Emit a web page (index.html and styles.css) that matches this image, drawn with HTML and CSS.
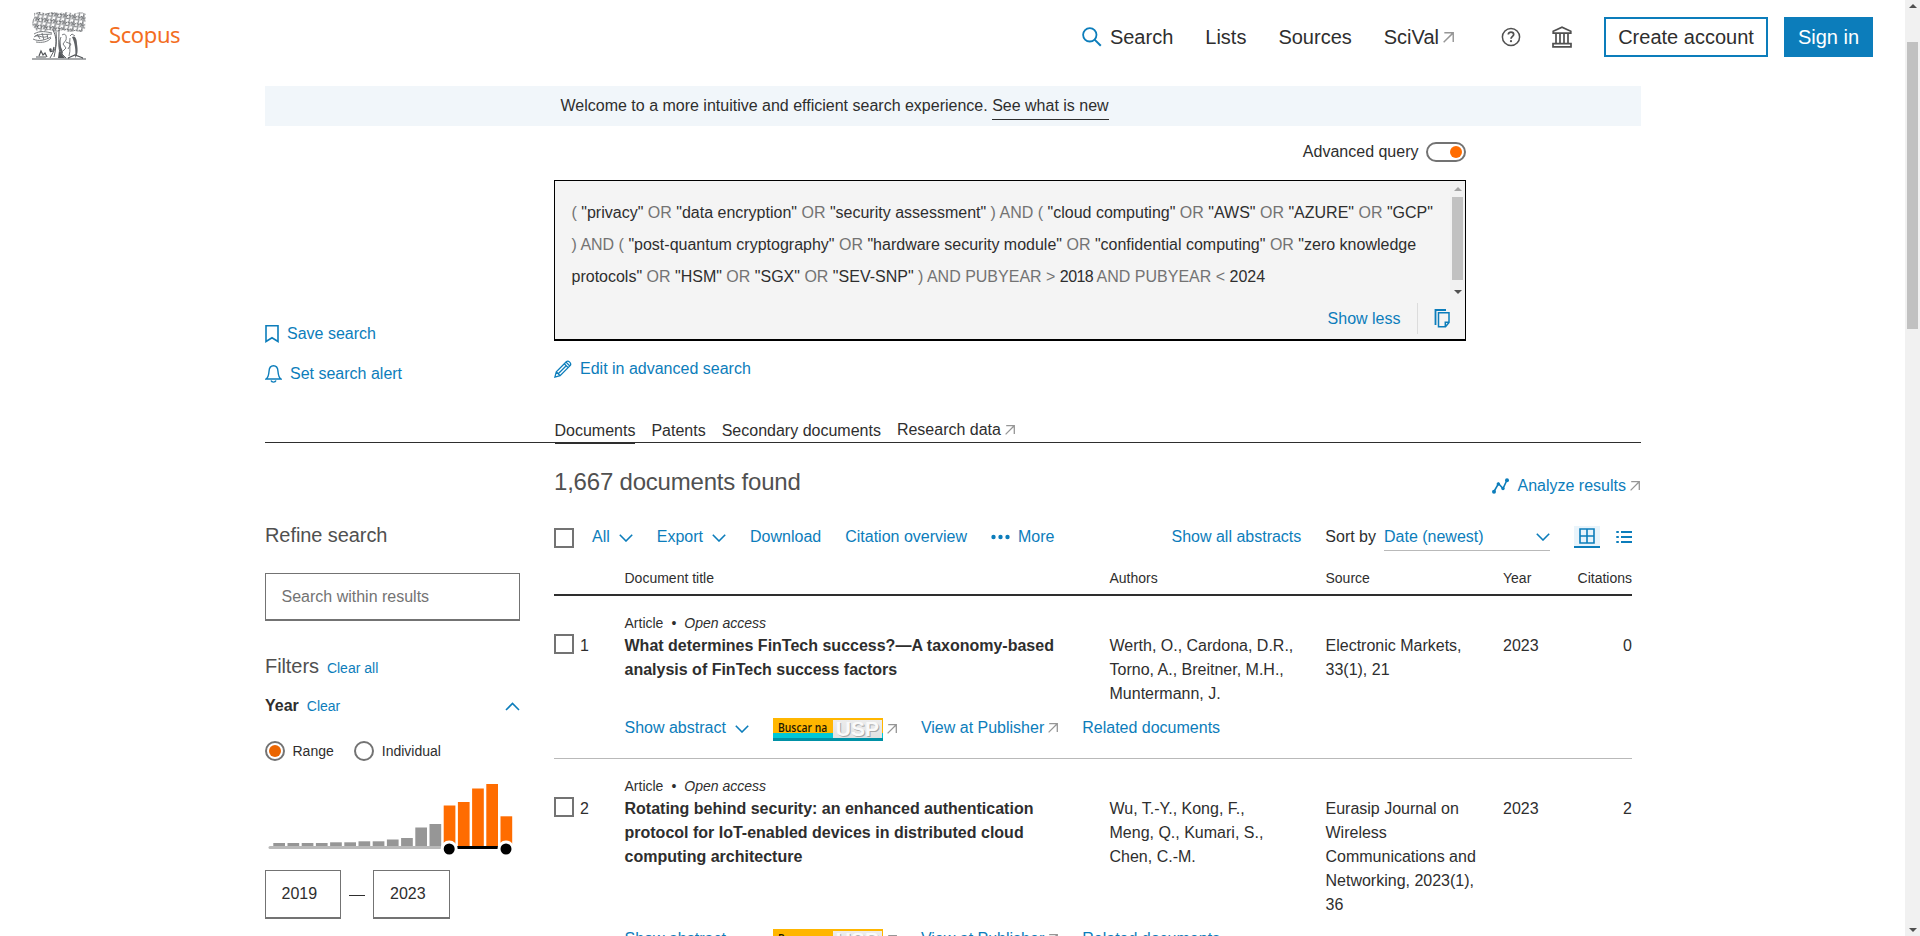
FILE: index.html
```html
<!DOCTYPE html>
<html lang="en">
<head>
<meta charset="utf-8">
<title>Scopus - Document search results</title>
<link rel="stylesheet" href="styles.css">
</head>
<body>
<svg class="defs" width="0" height="0" aria-hidden="true">
  <symbol id="ext" viewBox="0 0 10 10"><path d="M1.2.7H9.3V9M9.2.8L.6 9.4" fill="none" stroke="#969696" stroke-width="1.3"/></symbol>
  <symbol id="down" viewBox="0 0 14 8"><path d="M.8.8L7 7L13.2.8" fill="none" stroke="#0c7dbb" stroke-width="1.6"/></symbol>
  <pattern id="leaves" width="9" height="7" patternUnits="userSpaceOnUse" patternTransform="rotate(8)">
    <path d="M0 2c2-2 3 0 2 2s2 2 3 0M4 1c2-1 3 0 3 2s-2 1-2 3 3 1 4-1M1 6c1-1 2 0 2 2M7 7c0-1 1-2 2-1M8 0c-1 1 0 2 1 1M2 0l1 1.500M0 4.500l1 1M6 5.500l1.500-1" fill="none" stroke="#505357" stroke-width="1"/>
  </pattern>
</svg>
<div class="window">
  <div class="page">
    <header class="header">
      <svg class="tree" width="54" height="48" viewBox="0 0 54 48">
        <path d="M2 1L8 0L14 1.500L20 0L27 1L35 0L42 1.500L49 0L54 2L53 18L49 20L43 19L37 20L31 18L24 20L17 18L11 20L5 19L1 15L0 10L2 6Z" fill="url(#leaves)"/>
        <path d="M2 22C8 18 15 20 20 21M2 25C7 21 14 23 20 22M1 27C7 30 13 28 19 25M4 30C10 31 16 30 19 26M3 24c5-1 8 3 13 0M5 22l3 5M10 21l2 7M15 22l1 5" fill="none" stroke="#6b6e72" stroke-width=".9"/>
        <path d="M21 18C24 24 25 30 23 37L18 46M27 18C27 26 26 35 28 40L34 46M24 20c1 8 0 17-2 25" fill="none" stroke="#606367" stroke-width="1"/>
        <path d="M29 25c-2 5-2 12 1 17M30 23c3-2 5 0 4 5l-3 4 3 4-3 3M38 26c-1 5 1 12-1 18M34 30l5 2-3 5M38 24l2-2 3 2" fill="none" stroke="#6b6e72" stroke-width=".9"/>
        <path d="M40 25c3-2 5 2 5 7 1 6 1 11-2 14 1-7 0-15-3-21zM28 26l-1 10 3 7 1-3-2-5z" fill="#606367"/>
        <path d="M27 39l6 7h-7z" fill="#53565a"/>
        <path d="M0 47H54M4 45h10M7 44l2-5 2 4 2-2 2 4M18 40c2-2 1-4 0-3s1 3 3 2l1-4M36 46l7-3 8 3" fill="none" stroke="#53565a" stroke-width="1.200"/>
      </svg>
      <span class="brand">Scopus</span>
      <nav class="nav">
        <a class="nav-search"><svg width="20" height="20" viewBox="0 0 20 20"><circle cx="7.800" cy="7.800" r="6.700" fill="none" stroke="#0c7dbb" stroke-width="1.800"/><path d="M12.600 12.600L18.800 18.800" stroke="#0c7dbb" stroke-width="2"/></svg>Search</a>
        <a>Lists</a>
        <a>Sources</a>
        <a class="nav-ext">SciVal<svg width="11" height="11"><use href="#ext"/></svg></a>
      </nav>
      <svg class="help" width="20" height="20" viewBox="0 0 20 20"><circle cx="10" cy="10" r="8.600" fill="none" stroke="#505050" stroke-width="1.500"/><path d="M7.300 7.600C7.300 4.300 12.700 4.400 12.700 7.500C12.700 9.400 10 9.300 10 11.800" fill="none" stroke="#505050" stroke-width="1.700"/><circle cx="10" cy="14.200" r="1.100" fill="#505050"/></svg>
      <svg class="bank" width="20" height="22" viewBox="0 0 20 22"><path d="M1.200 7.200V5.200L10 1.200L18.800 5.200V7.200ZM4 8V18M8 8V18M12 8V18M16 8V18M1 20.900V17.700H19V20.900Z" fill="none" stroke="#505050" stroke-width="1.700"/></svg>
      <a class="btn">Create account</a>
      <a class="btn btn-primary">Sign in</a>
    </header>

    <div class="content">
      <div class="banner">Welcome to a more intuitive and efficient search experience.&nbsp;<a>See what is new</a></div>

      <div class="top">
        <div class="saved">
          <a><svg width="14" height="18" viewBox="0 0 14 18"><path d="M1 .8H13V16.500L7 12.800L1 16.500Z" fill="none" stroke="#0c7dbb" stroke-width="1.600"/></svg>Save search</a>
          <a><svg width="17" height="18" viewBox="0 0 17 18"><path d="M1 14H16C13.700 12.500 13.300 10.500 13 6.500C12.800 3 11.500.8 8.500.8S4.200 3 4 6.500C3.700 10.500 3.300 12.500 1 14ZM6 15.500C6.700 17.700 10.300 17.700 11 15.500" fill="none" stroke="#0c7dbb" stroke-width="1.400"/></svg>Set search alert</a>
        </div>
        <div class="query">
          <div class="toggle-row">Advanced query<span class="toggle"></span></div>
          <div class="query-box">
            <div class="query-scroll">
              <p>( <b>"privacy"</b> OR <b>"data encryption"</b> OR <b>"security assessment"</b> ) AND ( <b>"cloud computing"</b> OR <b>"AWS"</b> OR <b>"AZURE"</b> OR <b>"GCP"</b><br>) AND ( <b>"post-quantum cryptography"</b> OR <b>"hardware security module"</b> OR <b>"confidential computing"</b> OR <b>"zero knowledge</b><br><b>protocols"</b> OR <b>"HSM"</b> OR <b>"SGX"</b> OR <b>"SEV-SNP"</b> ) AND PUBYEAR &gt; <b class="yr">2018</b> AND PUBYEAR &lt; <b>2024</b></p>
              <div class="mini-bar"><i class="tri up pale"></i><i class="mini-thumb"></i><i class="tri dn"></i></div>
            </div>
            <div class="query-foot"><a>Show less</a><svg width="16" height="19" viewBox="0 0 16 19"><path d="M4.500 3.800H15V13.500L11.500 17.800H4.500ZM11.300 17.500V13.300H15" fill="none" stroke="#0c7dbb" stroke-width="1.500"/><path d="M1.500 16V1H12" fill="none" stroke="#0c7dbb" stroke-width="1.800"/></svg></div>
          </div>
          <a class="edit"><svg width="18" height="18" viewBox="0 0 18 18"><path d="M.9 17.100L2.300 11.800L12.300 1.800C14.300-.2 18 3.500 16.100 5.600L6.100 15.700ZM10.300 3.800L14.200 7.700M12 2.100L15.900 6M4.500 13.500L11.700 6.300M2.300 11.800L6.100 15.700" fill="none" stroke="#0c7dbb" stroke-width="1.300"/></svg>Edit in advanced search</a>
        </div>
      </div>

      <div class="tabs">
        <a class="on">Documents</a><a>Patents</a><a>Secondary documents</a><a class="research">Research data<svg width="10" height="10"><use href="#ext"/></svg></a>
      </div>

      <div class="body">
        <aside class="side">
          <h2>Refine search</h2>
          <div class="field wide">Search within results</div>
          <div class="filters"><h2>Filters</h2><a>Clear all</a></div>
          <div class="year"><strong>Year</strong><a>Clear</a><svg width="15" height="9" viewBox="0 0 15 9"><path d="M1 8L7.500 1.500L14 8" fill="none" stroke="#0c7dbb" stroke-width="1.600"/></svg></div>
          <div class="radios"><i class="radio checked"></i><span>Range</span><i class="radio"></i><span>Individual</span></div>
          <svg class="chart" width="255" height="74" viewBox="0 0 255 74">
            <g fill="#969696"><rect x="8.300" y="61" width="11.700" height="4"/><rect x="22.500" y="61" width="11.700" height="4"/><rect x="36.700" y="61" width="11.700" height="4"/><rect x="50.900" y="61" width="11.700" height="4"/><rect x="65.100" y="60.300" width="11.700" height="5"/><rect x="79.300" y="60.300" width="11.700" height="5"/><rect x="93.500" y="59.300" width="11.700" height="6"/><rect x="107.700" y="59.300" width="11.700" height="6"/><rect x="121.900" y="57.500" width="11.700" height="8"/><rect x="136.100" y="56" width="11.700" height="9"/><rect x="150.300" y="45.500" width="11.700" height="20"/><rect x="164.500" y="42" width="11.700" height="23"/></g>
            <path d="M5 65.500H247" stroke="#b9b9b9" stroke-width="3" stroke-linecap="round"/>
            <g fill="#ff6c00"><rect x="178.700" y="23.500" width="11.700" height="41"/><rect x="192.900" y="20" width="11.700" height="44.500"/><rect x="207.100" y="6.500" width="11.700" height="58"/><rect x="221.300" y="2" width="11.700" height="62.500"/><rect x="235.500" y="34.300" width="11.700" height="30"/></g>
            <path d="M184 65.500H234" stroke="#000" stroke-width="3"/>
            <g stroke="#fff" stroke-width="3"><circle cx="184.200" cy="67" r="7"/><circle cx="241" cy="67" r="7"/></g>
          </svg>
          <div class="range"><div class="field">2019</div><span></span><div class="field second">2023</div></div>
        </aside>

        <main class="main">
          <div class="count"><h1>1,667 documents found</h1><a><svg width="17" height="16" viewBox="0 0 17 16"><path d="M2 13.500L6.500 5.500L11 10.500L15 2" fill="none" stroke="#0c7dbb" stroke-width="1.600"/><g fill="#0c7dbb"><circle cx="2" cy="13.700" r="2"/><circle cx="6.300" cy="6" r="1.700"/><circle cx="11" cy="10.500" r="1.700"/><circle cx="15" cy="2.200" r="2"/></g></svg><span>Analyze results</span><svg width="10" height="10"><use href="#ext"/></svg></a></div>

          <div class="toolbar">
            <i class="box"></i>
            <a class="all">All<svg width="14" height="8"><use href="#down"/></svg></a>
            <a class="export">Export<svg width="14" height="8"><use href="#down"/></svg></a>
            <a class="download">Download</a>
            <a class="cit">Citation overview</a>
            <a class="more"><svg width="19" height="6" viewBox="0 0 19 6"><g fill="#0c7dbb"><circle cx="2.500" cy="3" r="2.200"/><circle cx="9.500" cy="3" r="2.200"/><circle cx="16.500" cy="3" r="2.200"/></g></svg>More</a>
            <a class="abstracts">Show all abstracts</a>
            <span class="sort">Sort by</span>
            <div class="select">Date (newest)<svg width="14" height="8"><use href="#down"/></svg></div>
            <div class="grid-view"><svg width="16" height="16" viewBox="0 0 16 16"><path d="M1 1H15V15H1ZM8 1V15M1 8H15" fill="none" stroke="#0c7dbb" stroke-width="1.600"/></svg></div>
            <svg class="list-view" width="16" height="14" viewBox="0 0 16 14"><path d="M5 2H16M5 7H16M5 12H16M.3 2H2.800M.3 7H2.800M.3 12H2.800" stroke="#0c7dbb" stroke-width="1.800"/></svg>
          </div>

          <div class="thead cols"><span></span><span>Document title</span><span>Authors</span><span>Source</span><span>Year</span><span class="num">Citations</span></div>

          <article class="row">
            <div class="kind">Article<span>•</span><em>Open access</em></div>
            <div class="cols">
              <div class="pick"><i class="box"></i>1</div>
              <h3>What determines FinTech success?—A taxonomy-based<br>analysis of FinTech success factors</h3>
              <div>Werth, O., Cardona, D.R.,<br>Torno, A., Breitner, M.H.,<br>Muntermann, J.</div>
              <div>Electronic Markets,<br>33(1), 21</div>
              <div>2023</div>
              <div class="num">0</div>
            </div>
            <div class="actions"><a class="show">Show abstract<svg width="14" height="8"><use href="#down"/></svg></a><span class="usp"><b>Buscar na</b><i>USP</i></span><svg class="usp-ext" width="10" height="10"><use href="#ext"/></svg><a class="pub">View at Publisher<svg width="10" height="10"><use href="#ext"/></svg></a><a>Related documents</a></div>
          </article>

          <article class="row">
            <div class="kind">Article<span>•</span><em>Open access</em></div>
            <div class="cols">
              <div class="pick"><i class="box"></i>2</div>
              <h3>Rotating behind security: an enhanced authentication<br>protocol for IoT-enabled devices in distributed cloud<br>computing architecture</h3>
              <div>Wu, T.-Y., Kong, F.,<br>Meng, Q., Kumari, S.,<br>Chen, C.-M.</div>
              <div>Eurasip Journal on<br>Wireless<br>Communications and<br>Networking, 2023(1),<br>36</div>
              <div>2023</div>
              <div class="num">2</div>
            </div>
            <div class="actions"><a class="show">Show abstract<svg width="14" height="8"><use href="#down"/></svg></a><span class="usp"><b>Buscar na</b><i>USP</i></span><svg class="usp-ext" width="10" height="10"><use href="#ext"/></svg><a class="pub">View at Publisher<svg width="10" height="10"><use href="#ext"/></svg></a><a>Related documents</a></div>
          </article>
        </main>
      </div>
    </div>
  </div>
  <div class="scrollbar"><i class="tri up"></i><i class="thumb"></i><i class="tri dn"></i></div>
</div>
</body>
</html>
```

FILE: styles.css
```css
* { box-sizing: border-box; margin: 0; padding: 0; }
body { height: 936px; overflow: hidden; background: #fff; color: #2e2e2e; font: 16px/24px "Liberation Sans", Arial, sans-serif; white-space: nowrap; }
svg { display: block; flex: none; }
i, em { display: block; }
.defs { position: absolute; }
a { color: #0c7dbb; display: flex; align-items: center; }
h1, h2 { color: #505050; font-weight: 400; }
.window { display: flex; height: 936px; overflow: hidden; }
.page { width: 1905px; height: 936px; overflow: hidden; }

.scrollbar { width: 15px; height: 936px; background: #f1f1f1; display: flex; flex-direction: column; align-items: center; padding: 4px 0; }
.thumb { width: 11px; height: 287px; background: #c1c1c1; margin: 34px 0 auto; }
.tri { width: 0; height: 0; border: 4px solid transparent; }
.tri.up { border-top: 0; border-bottom-color: #505050; }
.tri.dn { border-bottom: 0; border-top-color: #505050; }
.tri.up.pale { border-bottom-color: #a3a3a3; }

.header { display: flex; align-items: center; height: 74px; padding: 0 32px; font-size: 20px; }
.tree { margin-top: -2px; }
.brand { margin: -7px 0 0 23px; font: 22px/30px "Noto Sans", sans-serif; letter-spacing: -.4px; color: #f36d21; }
.nav { display: flex; gap: 32px; margin-left: auto; }
.nav a { color: #2e2e2e; }
.nav-search svg { margin-right: 8px; }
.nav-ext svg { margin-left: 4px; }
.help { margin-left: 47px; }
.bank { margin: 0 32px 0 31px; }
.btn { height: 40px; width: 164px; justify-content: center; border: 2px solid #0c7dbb; color: #2e2e2e; }
.btn-primary { width: 89px; margin-left: 16px; background: #0c7dbb; color: #fff; }

.content { width: 1376px; margin: 12px 0 0 265px; }
.banner { display: flex; height: 40px; padding: 8px 0 0 295.5px; background: #f1f6fa; }
.banner a { color: #2e2e2e; height: 26px; border-bottom: 1px solid #2e2e2e; align-items: flex-start; }

.top { display: grid; grid-template-columns: 289px 912px; height: 293px; }
.saved { display: flex; flex-direction: column; gap: 16px; padding-top: 196px; }
.saved svg { margin: 0 8px 0 0; }
.toggle-row { display: flex; align-items: center; justify-content: flex-end; gap: 7.5px; padding-top: 14px; }
.toggle { width: 40px; height: 20px; border: 2px solid #737373; border-radius: 10px; padding: 2px; display: flex; justify-content: flex-end; }
.toggle::after { content: ""; width: 12px; height: 12px; border-radius: 50%; background: #ff6c00; }
.query-box { height: 161px; margin-top: 16px; border: 1px solid #000; border-bottom-width: 2px; background: #f4f4f4; }
.query-scroll { display: flex; justify-content: space-between; height: 119px; padding-left: 16.5px; color: #737373; }
.query-scroll p { line-height: 32px; padding-top: 16px; }
.query-scroll b { font-weight: 400; color: #2e2e2e; }
.query-scroll .yr { letter-spacing: -.6px; }
.mini-bar { width: 15px; background: #f1f1f1; display: flex; flex-direction: column; align-items: center; justify-content: space-between; padding: 6px 0; }
.mini-thumb { width: 11px; height: 83px; background: #c1c1c1; margin-bottom: 5px; }
.query-foot { display: flex; justify-content: flex-end; align-items: center; height: 37px; padding-right: 15.5px; }
.query-foot a { height: 31px; padding-right: 16px; border-right: 1px solid #dcdcdc; margin-right: 16px; }
.edit { margin-top: 16px; }
.edit svg { margin: 0 8px 0 0; }

.tabs { display: flex; gap: 16px; height: 24px; border-bottom: 1px solid #2e2e2e; padding-left: 289.5px; }
.tabs a { color: #2e2e2e; height: 25px; align-items: flex-start; }
.tabs .on { border-bottom: 2px solid #2e2e2e; }
.tabs .research { margin-top: -1px; }
.research svg { margin: 7px 0 0 4.5px; }

.body { display: grid; grid-template-columns: 255px 1087px; column-gap: 34px; }
.side { padding-top: 79px; font-size: 14px; }
.side h2 { font-size: 20px; line-height: 26px; letter-spacing: -.08px; }
.field { width: 76px; height: 49px; border: 1px solid #737373; border-bottom-width: 2px; padding: 11px 15.5px; font-size: 16px; }
.field.wide { width: 255px; height: 48px; margin-top: 25px; color: #737373; }
.filters { display: flex; align-items: center; gap: 8px; margin-top: 31px; }
.filters a { padding-top: 4px; }
.year { display: flex; align-items: center; gap: 8px; margin-top: 14px; }
.year strong { font-size: 16px; }
.year svg { margin-left: auto; }
.radios { display: flex; align-items: center; margin-top: 21px; }
.radios span { margin-left: 7.5px; }
.radio { width: 20px; height: 20px; border: 2px solid #737373; border-radius: 50%; }
.radio.checked { padding: 2px; }
.radio.checked::before { content: ""; display: block; width: 12px; height: 12px; border-radius: 50%; background: #eb6500; }
.radios span + .radio { margin-left: 20.5px; }
.chart { margin-top: 19px; }
.range { display: flex; align-items: center; gap: 8px; margin-top: 14px; }
.range span { width: 16px; height: 1px; background: #2e2e2e; margin-top: 2px; }
.second { padding-left: 16px; width: 77px; }

.count { display: flex; justify-content: space-between; height: 73px; padding: 24px 1px 0 0; }
.count h1 { font-size: 24px; line-height: 30px; letter-spacing: -.2px; }
.count a { height: 24px; margin-top: 7px; }
.count a span { margin: 0 4px 0 9px; }
.toolbar { display: flex; align-items: center; height: 40px; width: 1078px; padding-top: 4px; }
.toolbar > * { margin-top: -2px; }
.box { width: 20px; height: 20px; border: 2px solid #737373; flex: none; }
.toolbar .box { margin-top: 0; }
.all { margin-left: 18px; }
.toolbar a svg { margin-left: 9px; margin-top: 2px; }
.export, .download, .cit { margin-left: 24px; }
.more { margin-left: 24px; }
.toolbar .more svg { margin: 0 8px 0 0; }
.abstracts { margin-left: auto; }
.sort { margin-left: 24px; }
.toolbar .select { display: flex; justify-content: space-between; align-items: center; width: 166px; height: 26px; margin: 0 0 0 8px; padding-bottom: 1px; border-bottom: 1px solid #b9b9b9; color: #0c7dbb; }
.toolbar .grid-view { width: 26px; height: 22px; margin: -2px 16px 0 24px; background: #e9f4fb; border-bottom: 2px solid #0c7dbb; display: flex; justify-content: center; padding-top: 2px; }

.cols { display: grid; grid-template-columns: 70.5px 485px 216px 177.5px 60px 69px; }
.thead { width: 1078px; height: 40px; padding-top: 10px; border-bottom: 2px solid #2e2e2e; font-size: 14px; }
.num { text-align: right; }
.row { width: 1078px; padding: 16px 0 18px; border-bottom: 1px solid #b9b9b9; }
.kind { display: flex; padding-left: 70.5px; font-size: 14px; line-height: 22px; }
.kind span { margin: 0 8px; }
.pick { display: flex; gap: 6px; }
.pick .box { margin-top: 0; }
h3 { font: bold 16px/24px "Liberation Sans", Arial, sans-serif; }
.actions { display: flex; align-items: center; height: 24px; margin-top: 10px; padding-left: 70.5px; }
.show { margin-right: 24px; }
.show svg { margin: 2px 0 0 9px; }
.usp { width: 110px; height: 23px; margin-top: 3px; background: linear-gradient(#ffb600 0 15px, #00c8d7 15px 20px, #0091a6 20px); display: flex; padding: 2px 1px 3px 5px; justify-content: space-between; }
.usp b { width: 48px; font: 600 12px/15px "Open Sans", sans-serif; color: #1e1600; transform: scaleX(.86); transform-origin: left; }
.usp i { width: 49px; height: 18px; background: linear-gradient(#ececec, #e2e2e2); color: #fafafa; font: bold 21px/18px "Liberation Sans", sans-serif; text-align: center; text-shadow: 1px 1px #a8a8a8; }
.usp-ext { margin: 1px 24px 0 4px; }
.pub { margin-right: 24px; }
.pub svg { margin: 0 0 0 4px; }
```
